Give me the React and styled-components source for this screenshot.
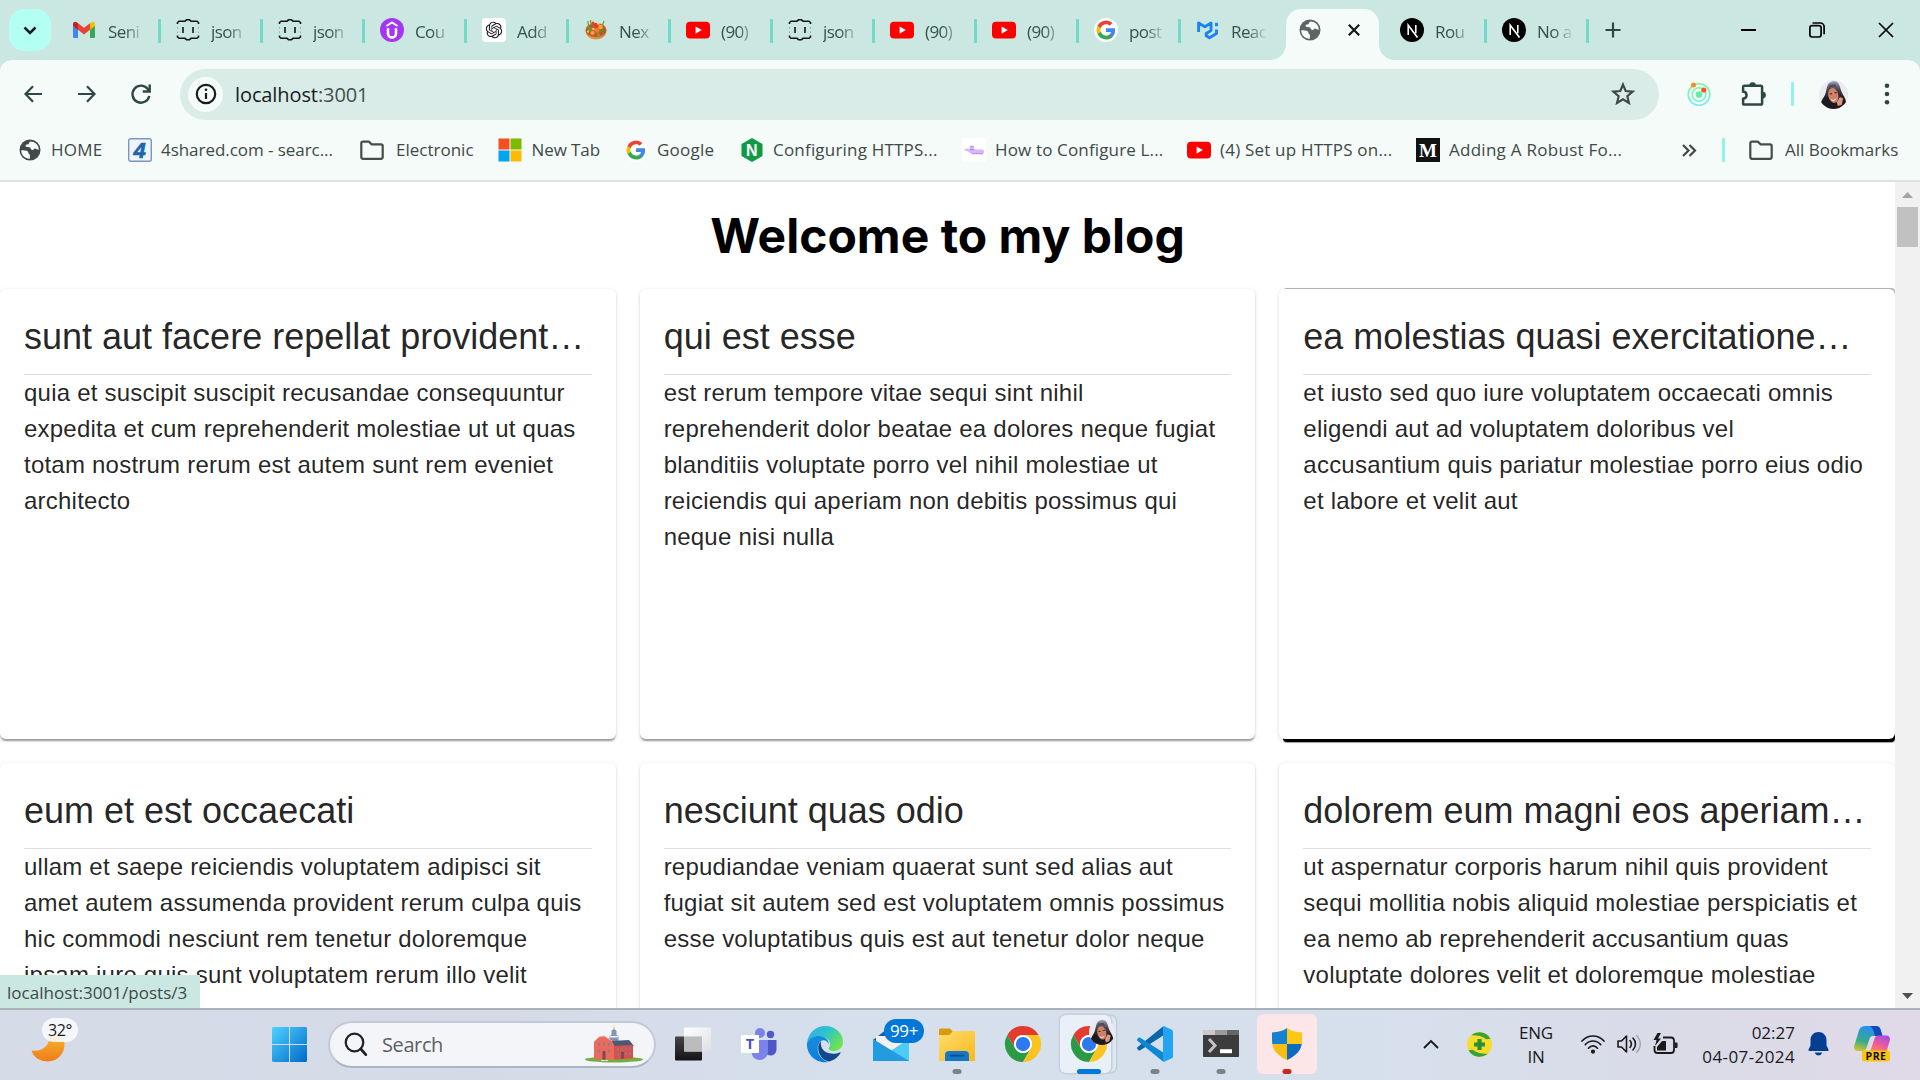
import React from "react";
import styled, { createGlobalStyle, css } from "styled-components";
import { RiOpenaiFill } from "react-icons/ri";

const Global = createGlobalStyle`
  *, *::before, *::after { box-sizing: border-box; }
  body { margin: 0; background: #fff; overflow: hidden; }
  svg { display: block; overflow: visible; flex: none; }
`;

const ui = `"Open Sans", "Noto Sans", sans-serif`;

const Screen = styled.div`
  width: 1920px;
  height: 1080px;
  display: flex;
  flex-direction: column;
  overflow: hidden;
  font-family: ${ui};
`;

/* ---------- tab strip ---------- */

const TabStrip = styled.div`
  height: 60px;
  flex: none;
  display: flex;
  background: #cbe7e1;
  padding-left: 9px;
`;

const TabSearch = styled.div`
  width: 42px;
  height: 42px;
  margin: 9px 5px 0 0;
  border-radius: 15px;
  background: #b3fff3;
  display: grid;
  place-items: center;
`;

const Tab = styled.div`
  width: ${(p) => (p.$first ? 105 : 102)}px;
  height: 60px;
  padding-left: ${(p) => (p.$first ? 16 : 15)}px;
  display: flex;
  align-items: center;
  position: relative;
`;

const TabLabel = styled.div`
  width: 37px;
  margin: 4px 0 0 ${(p) => (p.$first ? 12 : 11)}px;
  white-space: nowrap;
  font-size: 17px;
  line-height: 26px;
  letter-spacing: -0.6px;
  color: #35514e;
  mask-image: linear-gradient(90deg, #000 45%, transparent 100%);
`;

const TabDivider = styled.div`
  width: 3px;
  height: 24px;
  margin: 2px 0 0 auto;
  border-radius: 1px;
  background: #72d9c9;
`;

const ActiveTab = styled.div`
  width: 93px;
  height: 51px;
  margin: 9px 6px 0 3px;
  padding: 0 19px 9px 12px;
  border-radius: 15px 15px 0 0;
  background: #f4fbf9;
  display: flex;
  align-items: center;
  justify-content: space-between;
  position: relative;
  &::before, &::after {
    content: "";
    position: absolute;
    bottom: 0;
    width: 15px;
    height: 15px;
  }
  &::before { left: -15px; background: radial-gradient(circle at 0 0, transparent 14.5px, #f4fbf9 15px); }
  &::after { right: -15px; background: radial-gradient(circle at 100% 0, transparent 14.5px, #f4fbf9 15px); }
`;

const NewTab = styled.div`
  width: 48px;
  display: grid;
  place-items: center;
`;

const WindowControls = styled.div`
  margin-left: auto;
  display: flex;
`;

const WindowButton = styled.div`
  width: 68.5px;
  height: 60px;
  display: grid;
  place-items: center;
`;

/* ---------- toolbar ---------- */

const ToolbarBack = styled.div`
  flex: none;
  height: 68px;
  background: #cbe7e1;
`;

const Toolbar = styled.div`
  height: 68px;
  padding-left: 6px;
  border-radius: 12px 12px 0 0;
  background: #f4fbf9;
  display: flex;
  align-items: center;
`;

const NavButton = styled.div`
  width: 54px;
  height: 54px;
  display: grid;
  place-items: center;
`;

const Omnibox = styled.div`
  width: 1479px;
  height: 51px;
  margin-left: 12px;
  padding: 0 23px 0 8px;
  border-radius: 26px;
  background: #daece7;
  display: flex;
  align-items: center;
`;

const SiteInfo = styled.div`
  width: 35px;
  height: 35px;
  border-radius: 50%;
  background: #f4fbf9;
  display: grid;
  place-items: center;
`;

const Url = styled.div`
  flex: 1;
  margin-left: 12px;
  font-size: 20px;
  line-height: 28px;
  letter-spacing: -0.1px;
  color: #43504e;
  padding-top: 1px;
  span { color: #171d1b; }
`;

const ToolSlot = styled.div`
  width: ${(p) => p.$w}px;
  display: grid;
  place-items: center;
`;

const Bar = styled.div`
  width: 3px;
  height: 24px;
  border-radius: 1px;
  background: #93f4e5;
`;

/* ---------- bookmarks ---------- */

const Bookmarks = styled.div`
  height: 54px;
  flex: none;
  padding: 0 0 8px 18px;
  background: #f4fbf9;
  border-bottom: 2px solid #d8e5e1;
  display: flex;
  align-items: center;
`;

const Bookmark = styled.div`
  width: ${(p) => p.$w}px;
  display: flex;
  align-items: center;
  gap: ${(p) => p.$gap}px;
  white-space: nowrap;
  font-size: 17px;
  line-height: 26px;
  letter-spacing: ${(p) => p.$ls}px;
  color: #3f4947;
`;

/* ---------- page ---------- */

const Viewport = styled.div`
  height: 826px;
  flex: none;
  display: flex;
  position: relative;
  background: #fff;
  overflow: hidden;
`;

const Page = styled.div`
  width: 1895px;
  height: 826px;
  overflow: hidden;
`;

const Heading = styled.h1`
  margin: 0;
  height: 107px;
  display: flex;
  align-items: center;
  justify-content: center;
  font: 700 48px/58px Inter, sans-serif;
  color: #000;
`;

const Grid = styled.div`
  display: grid;
  grid-template-columns: repeat(3, 1fr);
  grid-auto-rows: 450px;
  gap: 24px;
`;

const Card = styled.article`
  padding: 24px;
  border-radius: 6px;
  background: #fff;
  min-width: 0;
  color: rgba(0, 0, 0, 0.87);
  font-family: "Liberation Sans", Arial, sans-serif;
  box-shadow: 0 3px 1.5px -1.5px rgba(0, 0, 0, 0.2), 0 1.5px 1.5px 0 rgba(0, 0, 0, 0.14),
    0 1.5px 4.5px 0 rgba(0, 0, 0, 0.12);
  ${(p) =>
    p.$hovered &&
    css`
      box-shadow: 2px -3px 0 -2px #b4b4b4, 2px 5px 0 -2px #000, 2px 6px 0 -2px #a6a6a6,
        0 1.5px 4.5px 0 rgba(0, 0, 0, 0.14);
    `}
`;

const CardTitle = styled.h2`
  margin: 0 0 13px;
  font-size: 36px;
  font-weight: 400;
  line-height: 48px;
  white-space: nowrap;
`;

const CardBody = styled.p`
  margin: 0;
  border-top: 1px solid #dedede;
  font-size: 24px;
  line-height: 36px;
  letter-spacing: 0.225px;
  white-space: pre-line;
`;

const Scrollbar = styled.div`
  width: 25px;
  height: 826px;
  padding: 10px 0 9px;
  background: #f1f1f1;
  display: flex;
  flex-direction: column;
  align-items: center;
`;

const Thumb = styled.div`
  width: 21px;
  height: 40px;
  margin: 9px 0 auto;
  background: #c1c1c1;
`;

const Status = styled.div`
  position: absolute;
  left: 0;
  bottom: 0;
  width: 200px;
  height: 33px;
  padding-left: 7px;
  background: #cbe7e1;
  font-size: 17px;
  line-height: 35px;
  letter-spacing: 0.03px;
  color: #3f4947;
  white-space: nowrap;
`;

/* ---------- taskbar ---------- */

const Taskbar = styled.div`
  height: 72px;
  flex: none;
  border-top: 2px solid #a9b1b9;
  background: linear-gradient(90deg, #d6dbe8 0%, #d4dbe7 25%, #d5e0ec 45%, #d6e0ec 72%, #dadbe8 86%, #e0dae8 100%);
  display: flex;
  align-items: center;
`;

const Weather = styled.div`
  width: 256px;
  height: 70px;
  padding: 25px 0 0 31px;
  position: relative;
`;

const Temp = styled.div`
  position: absolute;
  left: 42px;
  top: 8px;
  width: 36px;
  height: 24px;
  border-radius: 12px;
  background: rgba(250, 250, 252, 0.88);
  font-size: 16px;
  line-height: 24px;
  text-align: center;
  letter-spacing: -0.3px;
  color: #1b1b1b;
`;

const Slot = styled.div`
  width: ${(p) => p.$w || 66}px;
  height: 70px;
  display: grid;
  place-items: center;
  position: relative;
  padding-bottom: 2px;
`;

const Search = styled.div`
  width: 328px;
  height: 47px;
  margin: 0 4px 2px 6px;
  padding: 0 11px 0 14px;
  border-radius: 24px;
  border: 2px solid #c3c9d9;
  border-bottom-color: #adb4c4;
  background: #f3f5f9;
  display: flex;
  align-items: center;
  font-size: 20px;
  color: #5d5f64;
  span { flex: 1; margin-left: 14px; letter-spacing: -0.4px; }
`;

const Running = styled.i`
  position: absolute;
  bottom: 6px;
  left: 50%;
  transform: translateX(-50%);
  width: ${(p) => p.$w || 9}px;
  height: 5px;
  border-radius: 3px;
  background: ${(p) => p.$c || "#7b828a"};
`;

const Plate = styled.div`
  position: absolute;
  left: ${(p) => (p.$alert ? 3 : 4)}px;
  top: ${(p) => (p.$alert ? 4 : 5)}px;
  width: ${(p) => (p.$alert ? 60 : 51)}px;
  height: ${(p) => (p.$alert ? 60 : 58)}px;
  border-radius: 6px;
  background: ${(p) => (p.$alert ? "#fde6e8" : "#eaf0f7")};
  box-shadow: ${(p) => (p.$alert ? "none" : "0 0 0 1.5px #c6d0dc, 6px 0 0 -1px #dde7f2, 6px 0 0 0.5px #c3ced9")};
`;

const Lift = styled.div`
  position: relative;
`;

const MailBadge = styled.div`
  position: absolute;
  left: 26px;
  top: 9px;
  width: 40px;
  height: 24px;
  border-radius: 12px;
  background: #0078d7;
  color: #fff;
  font-size: 17px;
  line-height: 24px;
  text-align: center;
  letter-spacing: -0.4px;
`;

const AvatarBadge = styled.div`
  position: absolute;
  left: 33px;
  top: 9px;
`;

const TrayText = styled.div`
  width: ${(p) => p.$w}px;
  text-align: ${(p) => p.$align};
  font-size: 17px;
  line-height: 24px;
  letter-spacing: ${(p) => p.$ls}px;
  color: #1a1a1c;
  padding-bottom: 1px;
  span { letter-spacing: 0; }
`;

const Spacer = styled.div`
  width: ${(p) => p.$w}px;
`;

/* ---------- drawings ---------- */

const Gmail = () => (
  <svg width="24" height="24" viewBox="0 0 24 24">
    <path d="M1 5.5v13.2c0 .8.6 1.4 1.4 1.4H6V10z" fill="#4285f4" />
    <path d="M23 5.5v13.2c0 .8-.6 1.4-1.4 1.4H18V10z" fill="#34a853" />
    <path d="M18 5.2v6.600l5-3.700V6c0-2-2.200-3-3.700-1.800z" fill="#fbbc04" />
    <path d="M6 11.800V5.200l6 4.500 6-4.500v6.600l-6 4.600z" fill="#ea4335" />
    <path d="M1 6v2.100l5 3.700V5.200L4.700 4.200C3.200 3 1 4 1 6z" fill="#c5221f" />
  </svg>
);

const Json = () => (
  <svg width="24" height="24" viewBox="0 0 24 24" fill="none" stroke="#161616" strokeWidth="1.6">
    <path d="M1.500 6V4.500L3 3.200h6l1.500-1.400h3L15 3.200h6l1.500 1.300V6M1.500 17.500V19L3 20.300h6l1.500 1.400h3l1.500-1.400h6l1.500-1.300v-1.500M7 9v6M17 9v6" />
    <path d="M1.500 9v1.500M22.500 9v1.500M1.500 13.500V15M22.500 13.500V15" strokeWidth="0.800" opacity=".35" />
  </svg>
);

const Udemy = () => (
  <svg width="24" height="24" viewBox="0 0 24 24">
    <circle cx="12" cy="12" r="12" fill="#a435f0" />
    <path d="M6.500 8L12 4.500 17.500 8" fill="none" stroke="#fff" strokeWidth="2" />
    <path d="M8 10.200v5.300a4 4 0 0 0 8 0v-5.300" fill="none" stroke="#fff" strokeWidth="2.600" />
  </svg>
);

const GptTile = styled.div`
  width: 24px;
  height: 24px;
  border-radius: 4px;
  background: #fff;
  display: grid;
  place-items: center;
  color: #222;
`;

const Food = () => (
  <svg width="24" height="24" viewBox="0 0 24 24">
    <path d="M1.500 12h21c0 6-4.500 9.500-10.500 9.500S1.500 18 1.500 12z" fill="#e0903c" />
    <ellipse cx="12" cy="12" rx="10.500" ry="7" fill="#c9542c" />
    <path d="M4.500 9L4 3M7 7L6.500 2M18 8l2-5" stroke="#7e9c3a" strokeWidth="1.300" />
    <circle cx="6" cy="11" r="2.300" fill="#5f9a34" />
    <circle cx="11.500" cy="7.500" r="2.500" fill="#e53d2a" />
    <circle cx="16.500" cy="9" r="2.200" fill="#f3b32c" />
    <circle cx="18.500" cy="13" r="2" fill="#4f8f35" />
    <circle cx="13" cy="12.500" r="2.400" fill="#f07d22" />
    <circle cx="8.500" cy="15" r="2" fill="#f2a83a" />
    <circle cx="14.500" cy="16.500" r="1.600" fill="#72a33b" />
    <circle cx="9" cy="5" r="1.600" fill="#d84a2e" />
    <circle cx="4" cy="13.500" r="1.200" fill="#f4c14e" />
    <circle cx="14.500" cy="5.500" r="1.300" fill="#e9cf8f" />
    <circle cx="9.500" cy="11" r="1.200" fill="#f5d67a" />
    <circle cx="17" cy="15.500" r="1.100" fill="#e53d2a" />
  </svg>
);

const YouTube = () => (
  <svg width="24" height="24" viewBox="0 0 24 24">
    <rect x="0" y="3.700" width="24" height="16.800" rx="4" fill="#f00" />
    <path d="M9.600 8.500v7.200l6.200-3.600z" fill="#fff" />
  </svg>
);

const Google = () => (
  <svg width="24" height="24" viewBox="0 0 24 24">
    <circle cx="12" cy="12" r="12" fill="#fff" />
    <g transform="translate(1.700 1.700) scale(.86)">
      <path fill="#4285F4" d="M22.56 12.25c0-.78-.07-1.53-.2-2.25H12v4.260h5.920c-.26 1.370-1.040 2.530-2.210 3.310v2.770h3.570c2.080-1.920 3.280-4.740 3.280-8.090z" />
      <path fill="#34A853" d="M12 23c2.970 0 5.460-.98 7.280-2.660l-3.570-2.770c-.98.66-2.230 1.060-3.710 1.060-2.860 0-5.290-1.930-6.160-4.530H2.180v2.840C3.990 20.530 7.700 23 12 23z" />
      <path fill="#FBBC05" d="M5.840 14.090c-.22-.66-.35-1.360-.35-2.090s.13-1.430.35-2.090V7.070H2.180C1.430 8.550 1 10.220 1 12s.43 3.450 1.180 4.930l3.660-2.840z" />
      <path fill="#EA4335" d="M12 5.380c1.620 0 3.060.56 4.210 1.640l3.150-3.150C17.450 2.090 14.970 1 12 1 7.700 1 3.990 3.470 2.180 7.070l3.660 2.840c.87-2.600 3.300-4.530 6.160-4.530z" />
    </g>
  </svg>
);

const Mui = () => (
  <svg width="24" height="24" viewBox="0 0 24 24" fill="none" stroke="#1a82f7" strokeWidth="2.900" strokeLinejoin="round">
    <path d="M2.600 14V5l6.300 3.700L15 5v7.500l-4.800 2.900v2.400l3.300 2 7-4.200V11.500" />
    <path d="M20.500 8.300V4.800" />
  </svg>
);

const Globe = ({ color = "#5f6368" }) => (
  <svg width="24" height="24" viewBox="0 0 24 24">
    <circle cx="12" cy="12" r="10.500" fill={color} />
    <path d="M3.300 12.300c2 .3 5-.2 6.300 1 1.300 1.100.2 2.200 1.700 2.900 1.200.5.600 2.500.5 4.500-4.700.2-8.700-3.300-8.500-8.400z" fill="#f4fbf9" />
    <path d="M12.700 3.400c-2.300.700-1.200 2.400-2.700 2.900-1.500.4-2.700.5-2.300 2 .3 1.300 2.300.6 3.600.9 1.700.3 1.200 2.600 3 2.800 1.700.2 1.600-1.700 3-1.500 1.200.2 2 1.400 3.500 1.200.1-4.600-3.400-8.200-8.100-8.300z" fill="#f4fbf9" />
  </svg>
);

const Next = () => (
  <svg width="24" height="24" viewBox="0 0 24 24">
    <circle cx="12" cy="12" r="12" fill="#000" />
    <path d="M8.200 17V7.200l9.300 12.200M15.800 7v8.200" fill="none" stroke="#fff" strokeWidth="1.600" />
  </svg>
);

const Folder = () => (
  <svg width="24" height="24" viewBox="0 0 24 24" fill="none" stroke="#454d4b" strokeWidth="2.200" strokeLinejoin="round">
    <path d="M1.300 5.500c0-1 .7-1.800 1.700-1.800h6l2.700 2.700H21c1 0 1.700.8 1.700 1.700v11c0 1-.7 1.700-1.700 1.700H3c-1 0-1.700-.7-1.700-1.700z" />
  </svg>
);

const FourShared = () => (
  <svg width="24" height="24" viewBox="0 0 24 24">
    <rect x="0.700" y="0.700" width="22.600" height="22.600" rx="2" fill="#eef4fb" stroke="#7d97bb" strokeWidth="1.400" />
    <text x="11.500" y="19.500" textAnchor="middle" fontFamily="Liberation Sans, sans-serif" fontStyle="italic" fontWeight="700" fontSize="22" fill="#1b67ab" stroke="#1b67ab" strokeWidth=".7">4</text>
  </svg>
);

const Microsoft = () => (
  <svg width="24" height="24" viewBox="0 0 24 24">
    <path d="M.5.500h11v11H.5z" fill="#f25022" />
    <path d="M12.500.500h11v11h-11z" fill="#7fba00" />
    <path d="M.5 12.500h11v11H.5z" fill="#00a4ef" />
    <path d="M12.500 12.500h11v11h-11z" fill="#ffb900" />
  </svg>
);

const Nginx = () => (
  <svg width="24" height="24" viewBox="0 0 24 24">
    <path d="M12 0l10.500 6v12L12 24 1.500 18V6z" fill="#109a45" />
    <text x="12" y="17.600" textAnchor="middle" fontFamily="Liberation Sans, sans-serif" fontWeight="700" fontSize="16" fill="#fff">N</text>
  </svg>
);

const Pointer = () => (
  <svg width="24" height="24" viewBox="0 0 24 24">
    <path d="M0 0h24v24H0z" fill="#fff" />
    <path d="M1.500 12c2-1.500 4.500-1.400 6-1V9c0-2 4-2 4 0v2.600h8.500c3 0 3 4 0 4H9.500c-2 0-2-2.600-8-3.600z" fill="#d9b5fb" />
    <path d="M9 8.800h3M8 11.500h4.500M10 15.700h11" stroke="#b27cf0" strokeWidth="1" />
  </svg>
);

const Medium = () => (
  <svg width="24" height="24" viewBox="0 0 24 24">
    <path d="M0 0h24v24H0z" fill="#121212" />
    <text x="12" y="18.500" textAnchor="middle" fontFamily="Liberation Serif, serif" fontWeight="700" fontSize="19" fill="#fff">M</text>
  </svg>
);

const Stroke = ({ w, h, vb, d, sw = 2.500, c = "#2f4744", cap = "butt" }) => (
  <svg width={w} height={h} viewBox={vb} fill="none" stroke={c} strokeWidth={sw} strokeLinecap={cap}>
    <path d={d} />
  </svg>
);

const Reload = () => (
  <svg width="24" height="24" viewBox="0 0 24 24" fill="none" stroke="#2f4744" strokeWidth="2.400">
    <path d="M20.300 14a8.500 8.500 0 1 1-1.700-7.200l1.600 2" />
    <path d="M20.700 2.500v7h-7" />
  </svg>
);

const InfoIcon = () => (
  <svg width="22" height="22" viewBox="0 0 22 22">
    <circle cx="11" cy="11" r="9.200" fill="none" stroke="#171d1b" strokeWidth="2.200" />
    <path d="M11 10v6" stroke="#171d1b" strokeWidth="2.200" />
    <circle cx="11" cy="6.700" r="1.300" fill="#171d1b" />
  </svg>
);

const Star = () => (
  <svg width="26" height="26" viewBox="0 0 24 24" fill="none" stroke="#3f4947" strokeWidth="2" strokeLinejoin="miter">
    <path d="M12 3.300l2.500 5.900 6.400.6-4.900 4.200 1.500 6.300L12 16.900l-5.500 3.400L8 14 3.100 9.800l6.400-.6z" />
  </svg>
);

const Orbit = () => (
  <svg width="24" height="24" viewBox="0 0 24 24" fill="none">
    <defs>
      <linearGradient id="orbit" x1="0" y1="0" x2="0" y2="1">
        <stop offset="0" stopColor="#7df59a" />
        <stop offset="1" stopColor="#74f0ea" />
      </linearGradient>
    </defs>
    <circle cx="12" cy="12.500" r="10.800" stroke="url(#orbit)" strokeWidth="1.600" />
    <circle cx="12" cy="12.500" r="6.800" stroke="url(#orbit)" strokeWidth="1.600" />
    <circle cx="12" cy="12.500" r="3.300" fill="#62f0a0" />
    <circle cx="6.500" cy="3" r="2.500" fill="#f68a32" />
    <circle cx="16.800" cy="8" r="2.600" fill="#f4552f" />
  </svg>
);

const Puzzle = () => (
  <svg width="26" height="26" viewBox="0 0 26 26">
    <path d="M3.500 4.800h16.200c.8 0 1.400.6 1.400 1.400v16c0 .8-.6 1.400-1.400 1.400H3.500c-.8 0-1.400-.6-1.400-1.400v-4.400c4.600-.8 4.600-6.400 0-7.200V6.200c0-.8.6-1.400 1.400-1.400z" fill="none" stroke="#2f4744" strokeWidth="2.500" />
    <path d="M8.300 4.500a3.300 3.300 0 0 1 6.600 0zM21.500 10.700a3.400 3.400 0 0 1 0 6.800z" fill="#2f4744" />
  </svg>
);

const Face = ({ size, id }) => (
  <svg width={size} height={size} viewBox="0 0 30 30">
    <defs>
      <clipPath id={id}><circle cx="15" cy="15" r="15" /></clipPath>
      <linearGradient id={`${id}-hair`} x1="0" y1="0" x2="0" y2="1">
        <stop offset="0" stopColor="#9a9fb2" />
        <stop offset=".3" stopColor="#4c4552" />
        <stop offset=".6" stopColor="#1f1a20" />
      </linearGradient>
    </defs>
    <g clipPath={`url(#${id})`}>
      <path d="M0 0h30v30H0z" fill="#e9ebf0" />
      <path d="M13.500 1.500c4-1 7 1 8 5 1 4 2 6 3.500 9 2 3 4 7 3 15H2c-1-5 0-9 3-13 2-3 2-5 3-9 .8-4 2-6 5.500-7z" fill={`url(#${id}-hair)`} />
      <ellipse cx="14.800" cy="16" rx="5.200" ry="7.800" transform="rotate(-14 14.800 16)" fill="#cf8268" />
      <path d="M9 11c2-4.500 7-5.500 10-1.500l-2-5-6 .5z" fill="#544b58" />
      <path d="M12 19.500c2 2 4.500 1.500 6-.800-.7 3.300-5 4.300-6 .8z" fill="#fff" />
      <path d="M11 14.500l2.300-.4M16 13.500l2.300-.5" stroke="#402420" strokeWidth="1.200" />
      <path d="M18.500 23l3-5.500 3.500 1.500-1.500 6.500-4 1.500z" fill="#dc9880" />
    </g>
  </svg>
);

const Dots = () => (
  <svg width="6" height="26" viewBox="0 0 6 26" fill="#2f4744">
    <circle cx="3" cy="4.700" r="2.300" /><circle cx="3" cy="13" r="2.300" /><circle cx="3" cy="21.300" r="2.300" />
  </svg>
);

const Restore = () => (
  <svg width="16" height="16" viewBox="0 0 16 16" fill="none" stroke="#000" strokeWidth="1.700">
    <rect x="0.900" y="3.600" width="11.200" height="11.400" rx="2.200" />
    <path d="M3.500 1h7.800c2 0 3.800 1.500 3.800 3.700v7.500" />
  </svg>
);

const Moon = () => (
  <svg width="34" height="28" viewBox="0 0 34 28">
    <defs>
      <linearGradient id="moon" x1="0" y1="0" x2="0" y2="1">
        <stop offset="0" stopColor="#f3b62b" />
        <stop offset="1" stopColor="#f07c1b" />
      </linearGradient>
    </defs>
    <path d="M.5 15.500c10 1.500 18-4 18.500-15 8-2 14 3 14.500 8C34 18 27 26.500 17 26.500 9 26.500 2.500 22.500.5 15.500z" fill="url(#moon)" />
  </svg>
);

const Windows = () => (
  <svg width="35" height="35" viewBox="0 0 35 35">
    <defs>
      <linearGradient id="win" gradientUnits="userSpaceOnUse" x1="0" y1="0" x2="35" y2="35">
        <stop offset="0" stopColor="#4fd2ff" />
        <stop offset="1" stopColor="#0069c8" />
      </linearGradient>
    </defs>
    <path d="M1.500 0H17v17H0V1.500C0 .7.700 0 1.500 0zM18 0h15.500c.8 0 1.500.7 1.500 1.500V17H18zM0 18h17v17H1.500C.7 35 0 34.300 0 33.500zM18 18h17v15.500c0 .8-.7 1.500-1.500 1.500H18z" fill="url(#win)" />
  </svg>
);

const Glass = () => (
  <svg width="24" height="24" viewBox="0 0 24 24" fill="none" stroke="#202124">
    <circle cx="10.500" cy="10.500" r="8.800" strokeWidth="2.200" />
    <path d="M16.800 17l5 5.600" strokeWidth="2.800" strokeLinecap="round" />
  </svg>
);

const Building = () => (
  <svg width="58" height="38" viewBox="0 0 58 38">
    <ellipse cx="29" cy="34.500" rx="29" ry="3" fill="#6fae3f" />
    <path d="M29 0l.8 5h-1.600z" fill="#e8b33c" />
    <path d="M26.500 6c1-2 4-2 5 0v4l2 1v5h-9v-5l2-1z" fill="#8593b5" />
    <path d="M25 11h8v1.500h-8z" fill="#eef1f8" />
    <path d="M26 16l18-1 5 6-21 2z" fill="#4c5878" />
    <path d="M9 17l5-5 5-1 8 5 3 6v12.500H9z" fill="#ec6a5c" />
    <path d="M29 21l19-1v13.500L29 34.500z" fill="#d9504a" />
    <path d="M9 17l5-5 5-1 8 5" fill="none" stroke="#f2a59b" strokeWidth="1" />
    <path d="M14 18v3M19 17.500v3.500M24 18v3M14 24.500v3.500M24 24.500v3.500M33 23v2.500M37 22.800v2.500M41 22.600v2.500M45 22.400v2.500M33 28v2.500M41 27.600v2.500M45 27.400v2.500" stroke="#8a7d94" strokeWidth="1.700" />
    <path d="M17.500 26h3v8.500h-3zM36 27h3v6.800h-3z" fill="#7b4a55" />
    <path d="M16 35h7v1h-7z" fill="#e6e0d8" />
  </svg>
);

const TaskView = () => (
  <svg width="36" height="34" viewBox="0 0 36 34">
    <defs>
      <linearGradient id="tvd" x1="0" y1="0" x2="0" y2="1"><stop offset="0" stopColor="#454545" /><stop offset="1" stopColor="#141414" /></linearGradient>
      <linearGradient id="tvl" x1="0" y1="0" x2="1" y2="1"><stop offset="0" stopColor="#fff" /><stop offset="1" stopColor="#dcdfe3" /></linearGradient>
    </defs>
    <rect x="0" y="9.500" width="27" height="24" rx="1" fill="url(#tvd)" />
    <rect x="9" y="0.500" width="27" height="24" rx="1" fill="url(#tvl)" />
    <rect x="9" y="9.500" width="18" height="15" fill="#bcbcbc" />
  </svg>
);

const Teams = () => (
  <svg width="36" height="34" viewBox="0 0 36 34">
    <circle cx="29.500" cy="7.500" r="3.700" fill="#5059c9" />
    <path d="M24 13h11.500v9c0 4-2.500 6.500-6 6.500-2 0-4-.8-5.500-3z" fill="#4f57c4" />
    <circle cx="19" cy="6" r="5" fill="#7b83eb" />
    <path d="M10.500 13H27v11c0 5-3.500 9-8.500 9s-8-4-8-9z" fill="#7b83eb" />
    <rect x="0" y="8" width="18" height="18" fill="#fff" />
    <text x="9" y="22.300" textAnchor="middle" fontFamily="Open Sans, sans-serif" fontWeight="700" fontSize="14.500" fill="#4b53bc">T</text>
  </svg>
);

const Edge = () => (
  <svg width="36" height="36" viewBox="0 0 36 36">
    <defs>
      <linearGradient id="edt" x1="0" y1="0" x2="1" y2=".6"><stop offset="0" stopColor="#35a8e8" /><stop offset=".5" stopColor="#2cc4cf" /><stop offset="1" stopColor="#6fe34e" /></linearGradient>
      <linearGradient id="edb" x1="0" y1="0" x2=".6" y2="1"><stop offset="0" stopColor="#1c8edb" /><stop offset="1" stopColor="#0a7ce0" /></linearGradient>
    </defs>
    <path d="M0 17C1 7 9 0 18 0c11 0 18 8 18 15.500 0 6-4.500 9.500-9 9.500-4 0-6-1.500-5-3.200 2.500-3.500 1-8-4-9.800C11 9 3 11 0 17z" fill="url(#edt)" />
    <path d="M0 17c3-6.500 10-8 15-6.500 5 1.700 7 5 7 8-1.500-4-6-6-9-2.500-5 5-2 17 8 20C9 38-1 28 0 17z" fill="url(#edb)" />
    <path d="M14 15.500c-2 1.500-3 4-2.800 7C11.700 30 17 35 22 35.500c5-1 9-4.500 11.500-8.500.3-.700-.2-1-.8-.6C27 29 17 28 14.500 21c-.7-2-.7-4-.5-5.500z" fill="#114a8b" />
  </svg>
);

const Mail = () => (
  <svg width="36" height="34" viewBox="0 0 36 34">
    <path d="M0 13L14 2h8l14 11v4H0z" fill="#0f5fa8" />
    <path d="M3 9h30v7L18 25 3 15z" fill="#f1f1f1" />
    <path d="M0 12l18 12 18-12v22H0z" fill="#27a6e5" />
    <path d="M36 12v22L18 24z" fill="#4fcbf7" />
    <path d="M0 34V12l36 22z" fill="#229be0" />
  </svg>
);

const Explorer = () => (
  <svg width="36" height="34" viewBox="0 0 36 34">
    <defs>
      <linearGradient id="fld" x1="0" y1="0" x2="1" y2="1"><stop offset="0" stopColor="#ffdc6e" /><stop offset="1" stopColor="#fbb91c" /></linearGradient>
    </defs>
    <path d="M0 3c0-1 .5-1.500 1.500-1.500H11l3 3.500-3 4H0z" fill="#d99a08" />
    <path d="M0 8h10l4.500-4H35c.7 0 1 .4 1 1v28c0 .6-.4 1-1 1H1c-.6 0-1-.4-1-1z" fill="url(#fld)" />
    <path d="M6 34v-6c0-2.500 1.500-4 4-4h16c2.500 0 4 1.500 4 4v6z" fill="#1478c8" />
    <path d="M11.500 28.700h13" stroke="#0b4a86" strokeWidth="1.800" strokeLinecap="round" />
  </svg>
);

const Chrome = () => (
  <svg width="36" height="36" viewBox="0 0 48 48">
    <path d="M24 12h20.800A24 24 0 0 0 3.200 12l10.400 18A12 12 0 0 1 24 12z" fill="#e33b2e" />
    <path d="M13.600 30L3.200 12A24 24 0 0 0 24 48l10.400-18a12 12 0 0 1-20.800 0z" fill="#2a9a47" />
    <path d="M34.400 30L24 48a24 24 0 0 0 20.800-36H24a12 12 0 0 1 10.400 18z" fill="#fcc31e" />
    <circle cx="24" cy="24" r="12" fill="#fff" />
    <circle cx="24" cy="24" r="9.500" fill="#2d79ee" />
  </svg>
);

const VsCode = () => (
  <svg width="36" height="36" viewBox="0 0 36 36">
    <path d="M26 .5L.4 21.300c-.5.5-.5 1.300 0 1.800l1.100 1.100c.5.5 1.200.5 1.800.1L27 9z" fill="#0a66a8" />
    <path d="M26 35.500L.4 14.700c-.5-.5-.5-1.300 0-1.800l1.100-1.200c.5-.4 1.200-.4 1.800 0L27 27z" fill="#0f87d2" />
    <path d="M26 .5c.4-.5.8-.5 1.300-.3l7.500 3.500c.8.400 1.200 1 1.200 1.800v25c0 .8-.4 1.400-1.200 1.800l-7.500 3.500c-.5.200-.9.200-1.300-.3z" fill="#23a4f2" />
  </svg>
);

const Terminal = () => (
  <svg width="36" height="28" viewBox="0 0 36 28">
    <path d="M1 0h34c.6 0 1 .4 1 1v25c0 .6-.4 1-1 1H1c-.6 0-1-.4-1-1V1c0-.6.4-1 1-1z" fill="#3c3c3c" />
    <path d="M1 0h11v5H0V1c0-.6.4-1 1-1z" fill="#c9c9c9" />
    <path d="M12 0h12v5H12z" fill="#9b9b9b" />
    <path d="M24 0h11c.6 0 1 .4 1 1v4H24z" fill="#666" />
    <path d="M6 9l6 6.500L6 22" fill="none" stroke="#c4c4c4" strokeWidth="3" />
    <path d="M17 19.200h12v4H17z" fill="#fff" />
  </svg>
);

const Shield = () => (
  <svg width="30" height="32" viewBox="0 0 30 32">
    <clipPath id="sh"><path d="M15 0c4 3 9 4 15 4.500V13c0 9-6 15-15 19C6 28 0 22 0 13V4.500C6 4 11 3 15 0z" /></clipPath>
    <g clipPath="url(#sh)">
      <path d="M0 0h15v16H0z" fill="#1581d0" /><path d="M15 0h15v16H15z" fill="#fbc816" />
      <path d="M0 16h15v16H0z" fill="#f8bd10" /><path d="M15 16h15v16H15z" fill="#0d6bc0" />
    </g>
  </svg>
);

const UpdatePlus = () => (
  <svg width="25" height="25" viewBox="0 0 24 24">
    <circle cx="12" cy="12" r="12" fill="#f8dc2a" />
    <path d="M4 3.200A12 12 0 0 1 22.500 6.500l-4 .5C14 3.500 9 3 4 3.200zM20 20.800A12 12 0 0 1 1.500 17.500l4-.5c4.500 3.500 9.500 4 14.500 3.800z" fill="#35a03c" />
    <path d="M12 6.800v10.400M6.800 12h10.400" stroke="#279133" strokeWidth="4" />
  </svg>
);

const Wifi = () => (
  <svg width="24" height="22" viewBox="0 0 24 22" fill="none" stroke="#1b1b1d" strokeWidth="1.700" strokeLinecap="round">
    <path d="M1 8c6-6.700 16-6.700 22 0M4.300 11.600c4.300-4.800 11.100-4.800 15.400 0M7.500 15.200c2.500-3 6.500-3 9 0" />
    <circle cx="12" cy="18.600" r="1.700" fill="#1b1b1d" stroke="none" />
    <circle cx="12" cy="18.600" r="1.200" />
  </svg>
);

const Volume = () => (
  <svg width="24" height="20" viewBox="0 0 24 20" fill="none" stroke="#1b1b1d" strokeWidth="1.600" strokeLinejoin="round" strokeLinecap="round">
    <path d="M1 7h3.500L9.500 2v16l-5-5H1z" />
    <path d="M13 6.500c1.600 2 1.600 5 0 7M16 4c3.300 3.500 3.300 8.500 0 12" />
    <path d="M19.500 1.500c5 5 5 12 0 17" stroke="#a6a9b0" />
  </svg>
);

const Battery = () => (
  <svg width="25" height="23" viewBox="0 0 25 23">
    <path d="M10 4.500h8c1.700 0 3 1.300 3 3V17c0 1.700-1.300 3-3 3H4.500c-1.700 0-3-1.300-3-3v-4" fill="none" stroke="#1b1b1d" strokeWidth="1.800" />
    <path d="M22 9.500h1.500c.6 0 1 .4 1 1v3.500c0 .6-.4 1-1 1H22z" fill="#1b1b1d" />
    <path d="M4 14l5-6h4v9.500H4z" fill="#1b1b1d" />
    <path d="M4.500 0L.5 7h3L2 13l6-7.500H5L8 0z" fill="#1b1b1d" />
  </svg>
);

const Bell = () => (
  <svg width="21" height="24" viewBox="0 0 21 24" fill="#043f92">
    <path d="M10.500 0c4.500 0 8 3.500 8 8v5.500l2 4c.3.700-.1 1.500-.9 1.500H1.400c-.8 0-1.200-.8-.9-1.500l2-4V8c0-4.500 3.500-8 8-8zM6.800 20.500h7.400c-.5 2-2 3-3.700 3s-3.200-1-3.700-3z" />
  </svg>
);

const Copilot = () => (
  <svg width="36" height="36" viewBox="0 0 36 36">
    <defs>
      <linearGradient id="cpa" x1=".3" y1="0" x2="0" y2="1"><stop offset="0" stopColor="#2693ea" /><stop offset=".55" stopColor="#37a98b" /><stop offset="1" stopColor="#e5c91c" /></linearGradient>
      <linearGradient id="cpb" x1=".8" y1="0" x2=".2" y2="1"><stop offset="0" stopColor="#a24ae8" /><stop offset=".5" stopColor="#ee5a9a" /><stop offset="1" stopColor="#fb8a5c" /></linearGradient>
    </defs>
    <path d="M11 0h11c2.500 0 4 1.500 4.700 4l1.800 6H19c-2 0-3 1-3.500 3L12.500 22c-.6 2-1.500 3-4 3H4c-3 0-4.500-2-3.800-5L5 4.500C6 1.500 8 0 11 0z" fill="url(#cpa)" />
    <path d="M16 0h6c2.500 0 4 1.500 4.700 4l1.800 6H21c-1-4-2-8-5-10z" fill="#1747bd" />
    <path d="M25 9.500h7c3 0 4.500 2 3.800 5L33 24c-.5 1.500-1 2-2 2H13c2 0 3.500-1.500 4-3l3.500-10.500c.6-2 2-3 4.500-3z" fill="url(#cpb)" />
    <rect x="8" y="24.500" width="28" height="11" rx="2.500" fill="#fdc40b" />
    <text x="22" y="33.600" textAnchor="middle" fontFamily="Open Sans, sans-serif" fontWeight="700" fontSize="10.500" letterSpacing=".5" fill="#111">PRE</text>
  </svg>
);

/* ---------- data ---------- */

const tabs = [
  [<Gmail />, "Seni"],
  [<Json />, "json"],
  [<Json />, "json"],
  [<Udemy />, "Cou"],
  [<GptTile><RiOpenaiFill size={20} /></GptTile>, "Add"],
  [<Food />, "Nex"],
  [<YouTube />, "(90)"],
  [<Json />, "json"],
  [<YouTube />, "(90)"],
  [<YouTube />, "(90)"],
  [<Google />, "post"],
  [<Mui />, "Reac"],
];

const bookmarks = [
  [<Globe color="#43494a" />, "HOME", 110, 9, 0.25],
  [<FourShared />, "4shared.com - searc...", 232, 9, -0.05],
  [<Folder />, "Electronic", 137.5, 12, 0],
  [<Microsoft />, "New Tab", 126.5, 10, -0.1],
  [<Google />, "Google", 116, 9, 0.25],
  [<Nginx />, "Configuring HTTPS...", 222, 9, 0.2],
  [<Pointer />, "How to Configure L...", 225, 9, 0.15],
  [<YouTube />, "(4) Set up HTTPS on...", 229, 9, 0.2],
  [<Medium />, "Adding A Robust Fo...", 249, 9, 0.27],
];

const posts = [
  ["sunt aut facere repellat provident…",
    "quia et suscipit suscipit recusandae consequuntur\nexpedita et cum reprehenderit molestiae ut ut quas\ntotam nostrum rerum est autem sunt rem eveniet\narchitecto"],
  ["qui est esse",
    "est rerum tempore vitae sequi sint nihil\nreprehenderit dolor beatae ea dolores neque fugiat\nblanditiis voluptate porro vel nihil molestiae ut\nreiciendis qui aperiam non debitis possimus qui\nneque nisi nulla"],
  ["ea molestias quasi exercitatione…",
    "et iusto sed quo iure voluptatem occaecati omnis\neligendi aut ad voluptatem doloribus vel\naccusantium quis pariatur molestiae porro eius odio\net labore et velit aut"],
  ["eum et est occaecati",
    "ullam et saepe reiciendis voluptatem adipisci sit\namet autem assumenda provident rerum culpa quis\nhic commodi nesciunt rem tenetur doloremque\nipsam iure quis sunt voluptatem rerum illo velit"],
  ["nesciunt quas odio",
    "repudiandae veniam quaerat sunt sed alias aut\nfugiat sit autem sed est voluptatem omnis possimus\nesse voluptatibus quis est aut tenetur dolor neque"],
  ["dolorem eum magni eos aperiam…",
    "ut aspernatur corporis harum nihil quis provident\nsequi mollitia nobis aliquid molestiae perspiciatis et\nea nemo ab reprehenderit accusantium quas\nvoluptate dolores velit et doloremque molestiae"],
];

export default function App() {
  return (
    <Screen>
      <Global />
      <TabStrip>
        <TabSearch>
          <Stroke w={14} h={9} vb="0 0 14 9" d="M1.500 1.500L7 7l5.500-5.500" c="#0f1f1d" />
        </TabSearch>
        {tabs.map(([icon, label], i) => (
          <Tab key={i} $first={i === 0}>
            {icon}
            <TabLabel $first={i === 0}>{label}</TabLabel>
            {i < tabs.length - 1 && <TabDivider />}
          </Tab>
        ))}
        <ActiveTab>
          <Globe />
          <Stroke w={12} h={12} vb="0 0 12 12" d="M.8.8l10.400 10.400M11.200.8L.8 11.200" sw={2.200} c="#111b19" />
        </ActiveTab>
        <Tab>
          <Next />
          <TabLabel>Rou</TabLabel>
          <TabDivider />
        </Tab>
        <Tab>
          <Next />
          <TabLabel>No a</TabLabel>
          <TabDivider />
        </Tab>
        <NewTab>
          <Stroke w={16} h={16} vb="0 0 16 16" d="M8 .5v15M.5 8h15" sw={2.200} />
        </NewTab>
        <WindowControls>
          <WindowButton><Stroke w={15} h={2} vb="0 0 15 2" d="M0 1h15" sw={2} c="#000" /></WindowButton>
          <WindowButton><Restore /></WindowButton>
          <WindowButton><Stroke w={16} h={16} vb="0 0 16 16" d="M1 1l14 14M15 1L1 15" sw={1.700} c="#000" /></WindowButton>
        </WindowControls>
      </TabStrip>

      <ToolbarBack>
        <Toolbar>
          <NavButton><Stroke w={18} h={18} vb="0 0 18 18" d="M18 9H2M9 1.200L1.500 9 9 16.800" sw={2.200} /></NavButton>
          <NavButton><Stroke w={18} h={18} vb="0 0 18 18" d="M0 9h16M9 1.200L16.500 9 9 16.800" sw={2.200} /></NavButton>
          <NavButton><Reload /></NavButton>
          <Omnibox>
            <SiteInfo><InfoIcon /></SiteInfo>
            <Url><span>localhost</span>:3001</Url>
            <Star />
          </Omnibox>
          <Spacer $w={13} />
          <ToolSlot $w={54}><Orbit /></ToolSlot>
          <ToolSlot $w={56}><Puzzle /></ToolSlot>
          <ToolSlot $w={21}><Bar /></ToolSlot>
          <ToolSlot $w={60}><Face size={29} id="avatar" /></ToolSlot>
          <ToolSlot $w={48}><Dots /></ToolSlot>
        </Toolbar>
      </ToolbarBack>

      <Bookmarks>
        {bookmarks.map(([icon, label, w, gap, ls]) => (
          <Bookmark key={label} $w={w} $gap={gap} $ls={ls}>{icon}{label}</Bookmark>
        ))}
        <ToolSlot $w={47}>
          <Stroke w={14} h={13} vb="0 0 14 13" d="M1 1l5.500 5.500L1 12M7.500 1L13 6.500 7.500 12" sw={2.200} c="#3f4947" />
        </ToolSlot>
        <ToolSlot $w={23}><Bar /></ToolSlot>
        <Spacer $w={14} />
        <Bookmark $w={150} $gap={12} $ls={0}><Folder />All Bookmarks</Bookmark>
      </Bookmarks>

      <Viewport>
        <Page>
          <Heading>Welcome to my blog</Heading>
          <Grid>
            {posts.map(([title, body], i) => (
              <Card key={title} $hovered={i === 2}>
                <CardTitle>{title}</CardTitle>
                <CardBody>{body}</CardBody>
              </Card>
            ))}
          </Grid>
        </Page>
        <Scrollbar>
          <svg width="11" height="6" viewBox="0 0 11 6"><path d="M0 6h11L5.500 0z" fill="#a3a3a3" /></svg>
          <Thumb />
          <svg width="11" height="6" viewBox="0 0 11 6"><path d="M0 0h11L5.500 6z" fill="#505050" /></svg>
        </Scrollbar>
        <Status>localhost:3001/posts/3</Status>
      </Viewport>

      <Taskbar>
        <Weather>
          <Moon />
          <Temp>32°</Temp>
        </Weather>
        <Slot><Windows /></Slot>
        <Search>
          <Glass />
          <span>Search</span>
          <Building />
        </Search>
        <Slot><TaskView /></Slot>
        <Slot><Teams /></Slot>
        <Slot><Edge /></Slot>
        <Slot><Mail /><MailBadge>99+</MailBadge></Slot>
        <Slot><Explorer /><Running /></Slot>
        <Slot><Chrome /></Slot>
        <Slot>
          <Plate />
          <Lift><Chrome /></Lift>
          <AvatarBadge><Face size={26} id="profile" /></AvatarBadge>
          <Running $w={24} $c="#0078d7" />
        </Slot>
        <Slot><VsCode /><Running /></Slot>
        <Slot><Terminal /><Running /></Slot>
        <Slot>
          <Plate $alert />
          <Lift><Shield /></Lift>
          <Running $c="#c42b1c" />
        </Slot>
        <Spacer $w={87} />
        <Slot $w={48}><Stroke w={16} h={10} vb="0 0 16 10" d="M1 9l7-7 7 7" sw={1.900} c="#1b1b1d" /></Slot>
        <Slot $w={48}><UpdatePlus /></Slot>
        <TrayText $w={66} $align="center" $ls={-0.2}>ENG<br />IN</TrayText>
        <Spacer $w={6} />
        <Slot $w={36}><Wifi /></Slot>
        <Slot $w={36}><Volume /></Slot>
        <Slot $w={36}><Battery /></Slot>
        <TrayText $w={112} $align="right" $ls={0.4}><span>02:27</span><br />04-07-2024</TrayText>
        <Spacer $w={5} />
        <Slot $w={36}><Bell /></Slot>
        <Spacer $w={9} />
        <Slot $w={54}><Copilot /></Slot>
      </Taskbar>
    </Screen>
  );
}
